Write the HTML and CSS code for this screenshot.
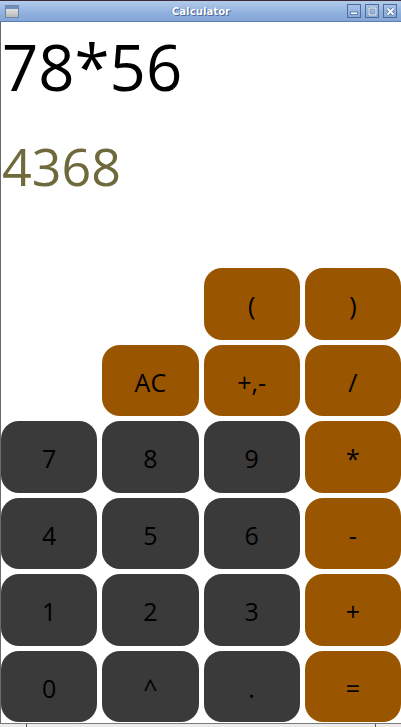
FILE: index.html
```html
<!DOCTYPE html>
<html>
<head>
<meta charset="utf-8">
<link rel="stylesheet" href="styles.css">
</head>
<body>
<div class="window">
  <div class="titlebar">
    <div class="appicon"><div class="appicon-top"></div></div>
    <div class="title">Calculator</div>
    <div class="wbtns">
      <div class="wbtn"><svg width="8" height="8" viewBox="0 0 8 8"><rect x="0.5" y="5" width="7" height="2.5" fill="#fff" stroke="#4d6c9c" stroke-width="0.8"/></svg></div>
      <div class="wbtn"><svg width="9" height="9" viewBox="0 0 9 9"><rect x="1" y="1" width="7" height="7" fill="none" stroke="#4d6c9c" stroke-width="2.2"/><rect x="1" y="1" width="7" height="7" fill="none" stroke="#fff" stroke-width="1.2"/></svg></div>
      <div class="wbtn"><svg width="9" height="9" viewBox="0 0 9 9"><path d="M1.5 1.5 L7.5 7.5 M7.5 1.5 L1.5 7.5" stroke="#4d6c9c" stroke-width="3.2"/><path d="M1.5 1.5 L7.5 7.5 M7.5 1.5 L1.5 7.5" stroke="#fff" stroke-width="1.8"/></svg></div>
    </div>
  </div>
  <div class="content">
    <div class="display">
      <div class="expr">78*56</div>
      <div class="result">4368</div>
    </div>
    <div class="keys">
      <div class="blank"></div>
      <div class="blank"></div>
      <div class="key op">(</div>
      <div class="key op">)</div>
      <div class="blank"></div>
      <div class="key op">AC</div>
      <div class="key op">+,-</div>
      <div class="key op">/</div>
      <div class="key num">7</div>
      <div class="key num">8</div>
      <div class="key num">9</div>
      <div class="key op">*</div>
      <div class="key num">4</div>
      <div class="key num">5</div>
      <div class="key num">6</div>
      <div class="key op">-</div>
      <div class="key num">1</div>
      <div class="key num">2</div>
      <div class="key num">3</div>
      <div class="key op">+</div>
      <div class="key num">0</div>
      <div class="key num">^</div>
      <div class="key num">.</div>
      <div class="key op">=</div>
    </div>
  </div>
  <div class="statusbar">
    <div class="seg seg-a"></div>
    <div class="seg seg-b"></div>
    <div class="seg seg-c"></div>
  </div>
</div>
</body>
</html>
```
FILE: styles.css
```css
html, body {
  margin: 0;
  padding: 0;
  background: #ffffff;
}
.window {
  width: 401px;
  height: 727px;
  display: flex;
  flex-direction: column;
  overflow: hidden;
  font-family: "Open Sans", "Noto Sans", sans-serif;
}
.titlebar {
  border-top: 1px solid #3a2c3a;
  background: linear-gradient(#b3cbea, #8fb0de 60%, #84a6d6);
  border-bottom: 1px solid #5b7fb4;
  display: flex;
  align-items: center;
  flex: none;
  box-sizing: content-box;
  height: 20px;
}
.appicon {
  width: 14px;
  height: 13px;
  margin-left: 5px;
  border: 1px solid #6a86b0;
  background: linear-gradient(#f0f0f0, #b8b8b8);
  box-sizing: border-box;
}
.appicon-top {
  height: 3px;
  background: #6f8fc0;
}
.title {
  flex: 1;
  text-align: center;
  font-family: "DejaVu Sans", sans-serif;
  font-weight: bold;
  font-size: 10px;
  color: #ffffff;
  text-shadow: 1px 1px 0 #4c6a98, -0.5px 0 0 #5d7bab;
  letter-spacing: 0.1px;
  padding-left: 36px;
}
.wbtns {
  display: flex;
  gap: 4px;
  margin-right: 4px;
}
.wbtn {
  width: 14px;
  height: 14px;
  box-sizing: border-box;
  border: 1px solid #4d6c9c;
  background: linear-gradient(#a9c2e6, #86a7d6);
  display: flex;
  align-items: center;
  justify-content: center;
}
.content {
  flex: 1;
  display: flex;
  flex-direction: column;
  border-left: 1px solid #6b6b6b;
  min-height: 0;
}
.display {
  flex: 1;
}
.expr {
  font-size: 63.5px;
  line-height: 80px;
  margin-top: 5px;
  color: #000000;
  padding-left: 1px;
}
.result {
  font-size: 52px;
  line-height: 70px;
  margin-top: 24px;
  color: #6e6a3c;
  padding-left: 1px;
}
.keys {
  display: grid;
  grid-template-columns: repeat(4, 1fr);
  grid-auto-rows: 71.5px;
  gap: 5px;
  flex: none;
  margin-bottom: 1px;
}
.key {
  border-radius: 18px;
  display: flex;
  align-items: center;
  justify-content: center;
  font-size: 25px;
  color: #000000;
  padding-top: 3px;
  box-sizing: border-box;
}
.num {
  background: #3a3a3a;
}
.op {
  background: #995500;
}
.statusbar {
  height: 3px;
  border-top: 1px solid #7a7a7a;
  background: #ececec;
  display: flex;
  flex: none;
}
.seg {
  height: 100%;
}
.seg-a {
  width: 26px;
  border-right: 1px solid #555555;
}
.seg-b {
  width: 348px;
  border-right: 1px solid #555555;
}
.seg-c {
  flex: 1;
}
```
